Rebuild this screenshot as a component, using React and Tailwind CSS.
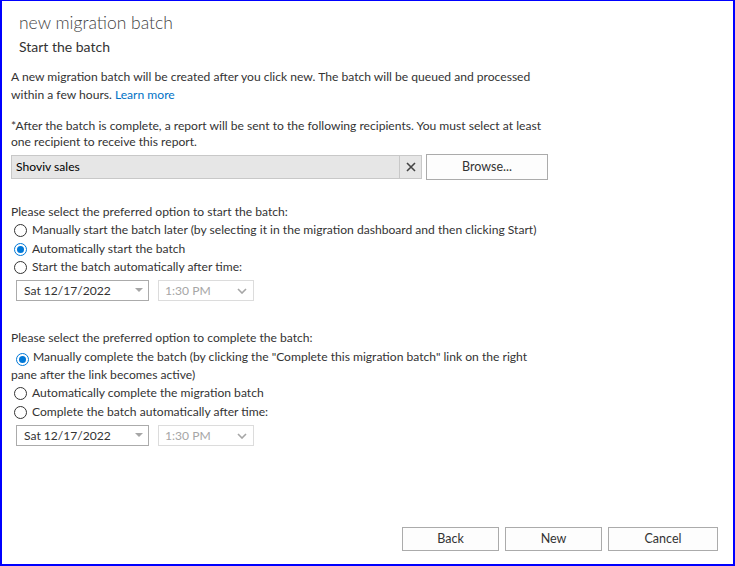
import { useState } from 'react'

function Radio({ checked, onClick, children, className = '' }) {
  return (
    <label onClick={onClick} className={`flex items-start cursor-default ${className}`}>
      <span
        className={`mt-[3px] ml-[3px] mr-[5px] w-[13px] h-[13px] shrink-0 rounded-full border flex items-center justify-center bg-white ${
          checked ? 'border-[#0078d7]' : 'border-[#333]'
        }`}
      >
        {checked && <span className="w-[7px] h-[7px] rounded-full bg-[#0078d7]" />}
      </span>
      <span>{children}</span>
    </label>
  )
}

function DateTimeRow({ className = 'mt-[3px]' }) {
  return (
    <div className={`flex gap-[9px] ml-[5px] ${className}`}>
      {/* Date */}
      <div className="w-[133px] h-[21px] border border-[#ababab] bg-white flex items-center justify-between pl-[7px] pr-[5px]">
        <span className="text-[#333]">Sat 12/17/2022</span>
        <svg width="8" height="5" viewBox="0 0 8 5">
          <path d="M0 0 L8 0 L4 4 Z" fill="#a6a6a6" />
        </svg>
      </div>
      {/* Time (disabled) */}
      <div className="w-[96px] h-[21px] border border-[#dcdcdc] bg-white flex items-center justify-between pl-[6px] pr-[6px]">
        <span className="text-[#a6a6a6]">1:30 PM</span>
        <svg width="10" height="6" viewBox="0 0 10 6">
          <path d="M1 1 L5 5 L9 1" fill="none" stroke="#a6a6a6" strokeWidth="1.6" />
        </svg>
      </div>
    </div>
  )
}

function Btn({ children, className = '' }) {
  return (
    <button
      type="button"
      className={`h-[24px] border border-[#ababab] bg-[#fdfdfd] text-[#333] text-[12.5px] ${className}`}
    >
      {children}
    </button>
  )
}

export default function App() {
  const [startOpt, setStartOpt] = useState('auto')
  const [completeOpt, setCompleteOpt] = useState('manual')

  return (
    <div
      className="w-[735px] h-[566px] bg-white border-l-2 border-t border-r-2 border-b-2 border-[#0000ff] flex flex-col text-[12.1px] leading-[18px] text-[#333] overflow-hidden"
      style={{ fontFamily: '"Segoe UI", Lato, sans-serif' }}
    >
      <div className="px-[9px]">
        {/* Header */}
        <div className="pl-[8px] pt-[10px]">
          <div className="text-[17.5px] leading-[24px] font-light text-[#444]">new migration batch</div>
          <div className="text-[14px] leading-[20px] mt-[2px] text-[#333]">Start the batch</div>
        </div>

        <p className="mt-[11px] whitespace-nowrap">
          A new migration batch will be created after you click new. The batch will be queued and processed
          <br />
          within a few hours. <a className="text-[#0072c6]">Learn more</a>
        </p>

        <p className="mt-[14px] leading-[16px] whitespace-nowrap">
          *After the batch is complete, a report will be sent to the following recipients. You must select at least
          <br />
          one recipient to receive this report.
        </p>

        {/* Recipient */}
        <div className="flex items-center mt-[4px]">
          <div className="w-[411px] h-[24px] bg-[#e6e6e6] border border-[#c8c8c8] flex">
            <div className="flex-1 pl-[4px] flex items-center text-black">Shoviv sales</div>
            <div className="w-[22px] border-l border-[#c8c8c8] flex items-center justify-center">
              <svg width="10" height="10" viewBox="0 0 10 10">
                <path d="M1 1 L9 9 M9 1 L1 9" stroke="#444" strokeWidth="1.6" />
              </svg>
            </div>
          </div>
          <Btn className="ml-[4px] w-[122px] h-[26px]">Browse...</Btn>
        </div>

        {/* Start options */}
        <div className="mt-[23px]">Please select the preferred option to start the batch:</div>
        <Radio checked={startOpt === 'manual'} onClick={() => setStartOpt('manual')}>
          Manually start the batch later (by selecting it in the migration dashboard and then clicking Start)
        </Radio>
        <Radio checked={startOpt === 'auto'} onClick={() => setStartOpt('auto')} className="mt-[1px]">
          Automatically start the batch
        </Radio>
        <Radio checked={startOpt === 'time'} onClick={() => setStartOpt('time')}>
          Start the batch automatically after time:
        </Radio>
        <DateTimeRow className="mt-[4px]" />

        {/* Complete options */}
        <div className="mt-[28px]">Please select the preferred option to complete the batch:</div>
        <div onClick={() => setCompleteOpt('manual')} className="whitespace-nowrap mt-[1px]">
          <span
            className={`inline-flex align-[-2px] ml-[5px] mr-[4px] w-[13px] h-[13px] rounded-full border items-center justify-center bg-white ${
              completeOpt === 'manual' ? 'border-[#0078d7]' : 'border-[#333]'
            }`}
          >
            {completeOpt === 'manual' && <span className="w-[7px] h-[7px] rounded-full bg-[#0078d7]" />}
          </span>
          Manually complete the batch (by clicking the "Complete this migration batch" link on the right
          <br />
          pane after the link becomes active)
        </div>
        <Radio checked={completeOpt === 'auto'} onClick={() => setCompleteOpt('auto')}>
          Automatically complete the migration batch
        </Radio>
        <Radio checked={completeOpt === 'time'} onClick={() => setCompleteOpt('time')} className="mt-[1px]">
          Complete the batch automatically after time:
        </Radio>
        <DateTimeRow className="mt-[4px]" />
      </div>

      {/* Footer */}
      <div className="mt-auto mb-[13px] flex justify-end gap-[6px] pr-[15px]">
        <Btn className="w-[97px]">Back</Btn>
        <Btn className="w-[97px]">New</Btn>
        <Btn className="w-[110px]">Cancel</Btn>
      </div>
    </div>
  )
}
